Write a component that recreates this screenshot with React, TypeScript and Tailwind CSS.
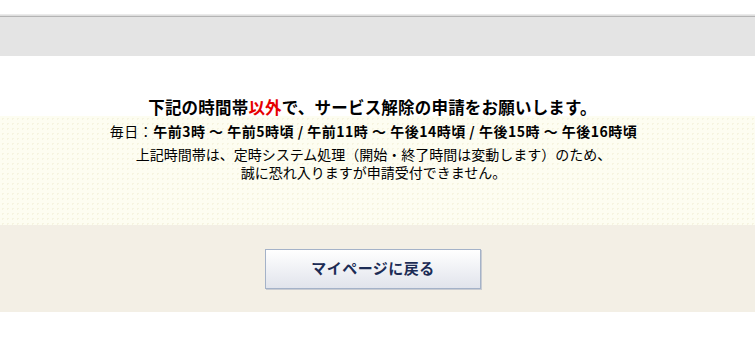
export default function App() {
  return (
    <div
      className="w-[755px] h-[347px] bg-white text-black overflow-hidden"
      style={{ fontFamily: '"Noto Sans CJK JP", "Noto Sans", sans-serif' }}
    >
      {/* Header band */}
      <div className="h-[14px] bg-white" />
      <div className="h-[2px] bg-gradient-to-b from-[#f0f0f0] to-[#d8d8d8]" />
      <div className="h-[1px] bg-[#b4b4b4]" />
      <div className="h-[39px] bg-[#e4e4e4]" />

      {/* Title */}
      <div className="h-[60px] flex items-end justify-center pr-[10px]">
        <h2 className="relative z-10 -mb-[1px] text-[16.5px] leading-[20px] font-bold tracking-[0.2px]">
          下記の時間帯<span className="text-[#e60000]">以外</span>で、サービス解除の申請をお願いします。
        </h2>
      </div>

      {/* Notice box */}
      <div className="h-[109px] bg-[#fdfdf1] bg-[radial-gradient(#f6f4e0_1px,transparent_1px)] bg-[length:5px_5px] pt-[6px] pr-[8px] flex flex-col items-center text-[14px] leading-[18px]">
        <p className="text-center tracking-[0.5px]">
          毎日：<span className="font-bold">午前3時 ～ 午前5時頃 / 午前11時 ～ 午後14時頃 / 午後15時 ～ 午後16時頃</span>
        </p>
        <p className="mt-[5px] text-center">
          上記時間帯は、定時システム処理（開始・終了時間は変動します）のため、
          <br />
          誠に恐れ入りますが申請受付できません。
        </p>
      </div>

      {/* Button area */}
      <div className="h-[87px] bg-[#f3efe5] flex items-center justify-center pr-[9px]">
        <button className="w-[216px] h-[40px] border border-[#a4b2c8] bg-gradient-to-b from-white to-[#e1e4ec] shadow-[1px_1px_0_#c9ccd2] text-[#1c2c55] text-[15px] font-bold tracking-[0.5px]">
          マイページに戻る
        </button>
      </div>
    </div>
  );
}
